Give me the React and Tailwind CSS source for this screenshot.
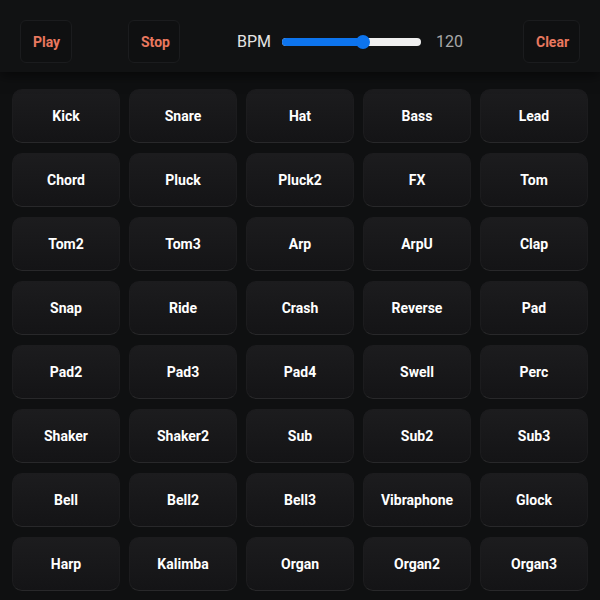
import React from "react";

const pads = [
  "Kick","Snare","Hat","Bass","Lead",
  "Chord","Pluck","Pluck2","FX","Tom",
  "Tom2","Tom3","Arp","ArpU","Clap",
  "Snap","Ride","Crash","Reverse","Pad",
  "Pad2","Pad3","Pad4","Swell","Perc",
  "Shaker","Shaker2","Sub","Sub2","Sub3",
  "Bell","Bell2","Bell3","Vibraphone","Glock",
  "Harp","Kalimba","Organ","Organ2","Organ3",
];

function CtrlButton({ children, className = "" }) {
  return (
    <button className={"h-[43px] pt-[1px] px-[12px] rounded-[6px] border border-[#1b1c1e] bg-[#0f1011] text-[#e9785f] text-[14px] font-bold " + className}>
      {children}
    </button>
  );
}

export default function App() {
  return (
    <div className="w-[600px] h-[600px] overflow-hidden bg-[#0f1011]" style={{ fontFamily: "Roboto, 'Noto Sans', sans-serif" }}>
      <div className="h-[72px] bg-[#111213] flex items-start pl-[20px] pr-[20px] pt-[20px] shadow-[0_4px_12px_rgba(0,0,0,0.5)] relative">
        <CtrlButton className="w-[52px]">Play</CtrlButton>
        <CtrlButton className="w-[52px] ml-[56px]">Stop</CtrlButton>
        <div className="h-[43px] flex items-center ml-[57px] pt-[1px]">
          <span className="text-[16px] text-[#e4e4e4] mr-[11px]">BPM</span>
          <div className="relative w-[139px] h-[8px] rounded-full bg-[#efefef]">
            <div className="absolute left-0 top-0 h-[8px] w-[82px] rounded-full bg-[#0d74ee]" />
            <div className="absolute left-[74px] top-[-3px] w-[14px] h-[14px] rounded-full bg-[#0d74ee]" />
          </div>
          <span className="text-[16px] text-[#a8a8a8] ml-[15px]">120</span>
        </div>
        <CtrlButton className="w-[57px] ml-auto">Clear</CtrlButton>
      </div>
      <div className="grid grid-cols-5 gap-x-[9px] gap-y-[10px] px-[12px] pt-[17px]">
        {pads.map((p) => (
          <button
            key={p}
            className="h-[54px] pt-[1px] rounded-[10px] border border-[#1c1c1e] border-b-[#28282a] bg-gradient-to-b from-[#1c1c1e] to-[#141416] text-white text-[14px] font-bold"
          >
            {p}
          </button>
        ))}
      </div>
    </div>
  );
}
